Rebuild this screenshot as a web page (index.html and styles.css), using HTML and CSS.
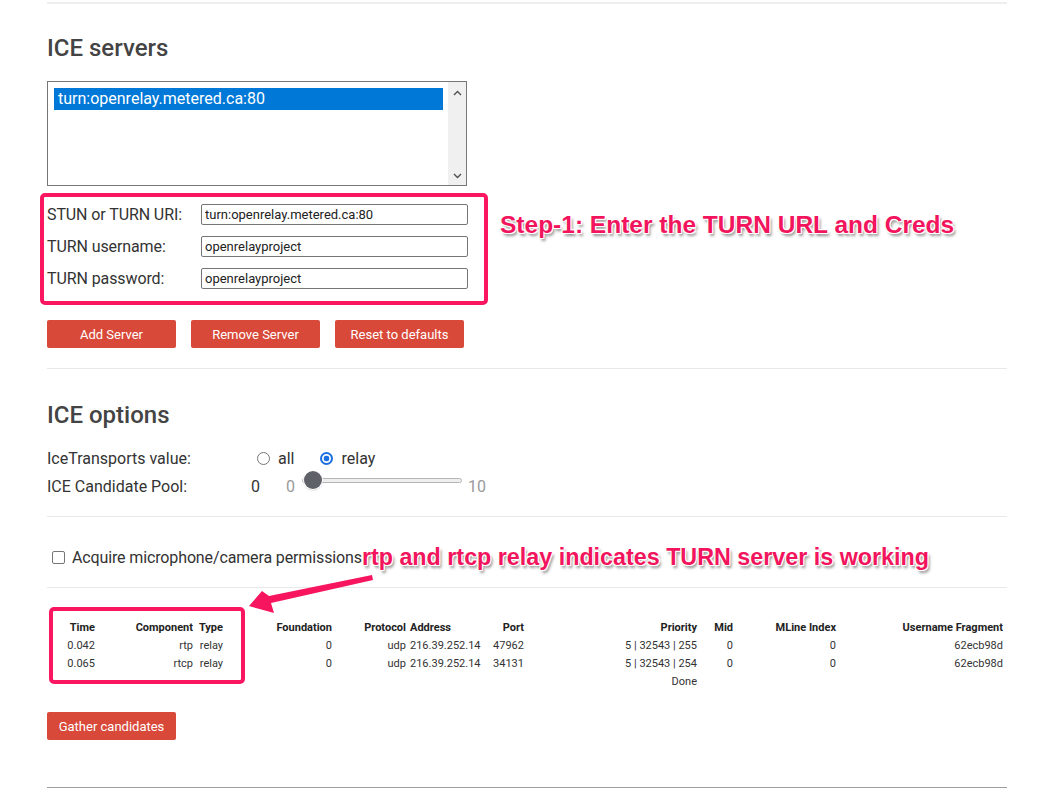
FILE: index.html
```html
<!DOCTYPE html>
<html>
<head>
<meta charset="utf-8">
<link rel="stylesheet" href="styles.css">
</head>
<body>
<div class="page">
  <div class="rule top"></div>

  <section class="servers">
    <h2>ICE servers</h2>
    <div class="listbox">
      <div class="options"><div class="opt">turn:openrelay.metered.ca:80</div></div>
      <div class="sbar">
        <svg width="9" height="6" viewBox="0 0 9 6"><path d="M1 5 L4.5 1.5 L8 5" fill="none" stroke="#505050" stroke-width="1.4"/></svg>
        <svg width="9" height="6" viewBox="0 0 9 6"><path d="M1 1 L4.5 4.5 L8 1" fill="none" stroke="#505050" stroke-width="1.4"/></svg>
      </div>
    </div>
    <div class="formrow">
      <div class="hl-box">
        <div class="field"><label>STUN or TURN URI:</label><input type="text" value="turn:openrelay.metered.ca:80"></div>
        <div class="field"><label>TURN username:</label><input type="text" value="openrelayproject"></div>
        <div class="field"><label>TURN password:</label><input type="text" value="openrelayproject"></div>
      </div>
      <div class="note note1">Step-1: Enter the TURN URL and Creds</div>
    </div>
    <div class="buttons">
      <button class="btn">Add Server</button>
      <button class="btn">Remove Server</button>
      <button class="btn">Reset to defaults</button>
    </div>
  </section>

  <div class="rule r1"></div>

  <section class="opts">
    <h2>ICE options</h2>
    <div class="row first">
      <span class="lbl">IceTransports value:</span>
      <span class="radio"></span><span class="rtxt">all</span>
      <span class="radio on"></span><span class="rtxt">relay</span>
    </div>
    <div class="row">
      <span class="lbl pool">ICE Candidate Pool:</span>
      <span class="val">0</span>
      <span class="min">0</span>
      <div class="slider"><div class="track"></div><div class="thumb"></div></div>
      <span class="max">10</span>
    </div>
  </section>

  <div class="rule r2"></div>

  <div class="row checkrow">
    <span class="check"></span><span class="perm">Acquire microphone/camera permissions</span><span class="note note2">rtp and rtcp relay indicates TURN server is working</span>
  </div>

  <div class="rule r3"></div>

  <table class="cands">
    <colgroup>
      <col class="c1"><col class="c2"><col class="c3"><col class="c4"><col class="c5"><col class="c6"><col class="c7"><col class="c8"><col class="c9"><col class="c10"><col class="c11">
    </colgroup>
    <tr><th>Time</th><th>Component</th><th>Type</th><th>Foundation</th><th>Protocol</th><th class="addr">Address</th><th>Port</th><th>Priority</th><th>Mid</th><th>MLine Index</th><th>Username Fragment</th></tr>
    <tr><td>0.042</td><td>rtp</td><td>relay</td><td>0</td><td>udp</td><td class="addr">216.39.252.14</td><td>47962</td><td>5 | 32543 | 255</td><td>0</td><td>0</td><td>62ecb98d</td></tr>
    <tr><td>0.065</td><td>rtcp</td><td>relay</td><td>0</td><td>udp</td><td class="addr">216.39.252.14</td><td>34131</td><td>5 | 32543 | 254</td><td>0</td><td>0</td><td>62ecb98d</td></tr>
    <tr><td><span class="peek">0.085</span></td><td></td><td></td><td></td><td></td><td class="addr"></td><td></td><td>Done</td><td></td><td></td><td></td></tr>
  </table>

  <button class="btn gather">Gather candidates</button>

  <div class="rule bottom"></div>

  <div class="hl-box2"></div>
  <svg class="arrow" width="1044" height="788" viewBox="0 0 1044 788">
    <polygon points="372,575 269,596 262,591 249,606 274,613 271,603 373,580" fill="#f7155f"/>
  </svg>
</div>
</body>
</html>
```

FILE: styles.css
```css
* { box-sizing: border-box; }
body {
  margin: 0;
  background: #fff;
  font-family: Roboto, "Liberation Sans", sans-serif;
  color: #333;
}
.page {
  position: relative;
  width: 1044px;
  height: 788px;
  overflow: hidden;
  padding: 0 37px 0 47px;
}
.rule { height: 0; border-top: 1px solid #e8e8e8; }
.rule.top { margin-top: 2px; border-top: 2px solid #eee; }
.rule.r1 { margin-top: 20px; }
.rule.r2 { margin-top: 16px; }
.rule.r3 { margin-top: 16px; }
.rule.bottom { margin-top: 47px; border-top: 1px solid #9e9e9e; }

h2 {
  margin: 0;
  font-size: 24px;
  font-weight: 500;
  line-height: 28px;
  color: #444;
}
.servers h2 { margin-top: 30px; }
.opts h2 { margin-top: 32px; }

.listbox {
  margin-top: 19px;
  width: 420px;
  height: 105px;
  border: 1px solid #767676;
  display: flex;
}
.options { flex: 1; padding: 6px 5px 0 6px; }
.opt {
  height: 22px;
  line-height: 22px;
  background: #0078d7;
  color: #fff;
  font-size: 16px;
  padding-left: 4px;
}
.sbar {
  width: 18px;
  background: #f0f0f0;
  display: flex;
  flex-direction: column;
  justify-content: space-between;
  align-items: center;
  padding: 8px 0 6px;
}

.formrow {
  display: flex;
  align-items: flex-start;
  margin-top: 7px;
  margin-left: -7px;
}
.hl-box {
  width: 448px;
  border: 4px solid #fa1660;
  border-radius: 5px;
  padding: 7px 16px 12px 3px;
}
.field { display: flex; align-items: center; height: 21px; }
.field + .field { margin-top: 11px; }
.field label { width: 154px; font-size: 16px; color: #333; letter-spacing: -0.1px; }
.field input {
  width: 267px;
  height: 21px;
  border: 1px solid #767676;
  border-radius: 2px;
  font: 13px Roboto, sans-serif;
  padding: 0 3px;
  color: #222;
  outline: none;
}

.note {
  font-family: "Liberation Sans", Arial, sans-serif;
  font-weight: 700;
  color: #f2145c;
  white-space: nowrap;
  text-shadow: -1px -1px 0 #fff, 1px -1px 0 #fff, -1px 1px 0 #fff, 1px 1px 0 #fff, 2px 3px 3px rgba(0,0,0,0.45);
}
.note1 { font-size: 24.5px; line-height: 28px; margin: 18px 0 0 12px; }
.note2 { font-size: 23.3px; line-height: 28px; }

.buttons { display: flex; gap: 15px; margin-top: 15px; }
.btn {
  width: 129px;
  height: 28px;
  background: #d9493a;
  color: #fff;
  border: 0;
  border-radius: 2px;
  font: 13px Roboto, sans-serif;
  padding: 0;
}
.gather { display: block; margin-top: 22px; }

.row { display: flex; align-items: center; height: 28px; font-size: 16px; color: #333; }
.row.first { margin-top: 15px; }
.lbl { width: 210px; }
.lbl.pool { width: 204px; }
.radio {
  width: 13px; height: 13px;
  border: 1px solid #767676;
  border-radius: 50%;
  margin-right: 8px;
}
.radio.on {
  border: 2px solid #1b6fe0;
  background: radial-gradient(circle, #1b6fe0 0 2.6px, #fff 3.2px);
  margin-left: 26px;
}
.val { width: 35px; }
.min { color: #9a9a9a; }
.max { color: #9a9a9a; margin-left: 6px; }
.slider { position: relative; width: 160px; height: 18px; margin-left: 7px; margin-bottom: 12px; }
.track {
  position: absolute; left: 0; right: 0; top: 7px; height: 5px;
  background: #efefef; border: 1px solid #b5b5b5; border-radius: 3px;
}
.thumb {
  position: absolute; left: 2px; top: 0;
  width: 18px; height: 18px; border-radius: 50%;
  background: #5f6168;
  box-shadow: 0 0 0 1px #fff, 0 1px 2px rgba(0,0,0,0.35);
}

.checkrow { margin-top: 26px; }
.perm { letter-spacing: -0.13px; }
.check {
  width: 13px; height: 13px;
  border: 1px solid #767676;
  border-radius: 2px;
  margin: 0 7px 0 5px;
}

.cands {
  margin-top: 31px;
  border-collapse: collapse;
  table-layout: fixed;
  width: 958px;
  font-size: 11px;
  color: #333;
}
.cands th, .cands td { padding: 0 2px; text-align: right; white-space: nowrap; }
.cands th { font-weight: 700; height: 17px; color: #222; }
.cands td { height: 18px; }
.cands .addr { text-align: left; }
.c1 { width: 50px; } .c2 { width: 98px; } .c3 { width: 30px; } .c4 { width: 109px; }
.c5 { width: 74px; } .c6 { width: 76px; } .c7 { width: 42px; } .c8 { width: 173px; }
.c9 { width: 36px; } .c10 { width: 103px; } .c11 { width: 167px; }
.peek { display: inline-block; line-height: 18px; vertical-align: top; clip-path: inset(10px 0 0 0); }

.hl-box2 {
  position: absolute;
  left: 49px; top: 607px;
  width: 196px; height: 77px;
  border: 4px solid #fa1660;
  border-radius: 5px;
}
.arrow { position: absolute; left: 0; top: 0; pointer-events: none; }
```
